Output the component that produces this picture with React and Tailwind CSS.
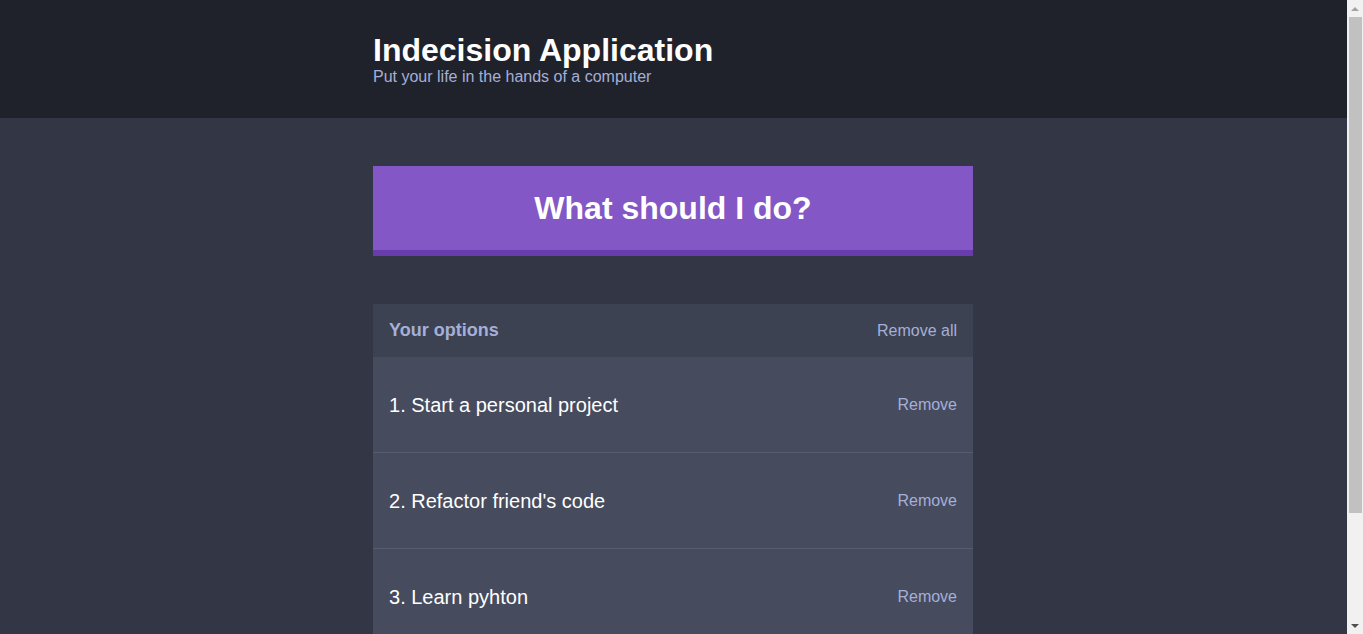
const options = ['Start a personal project', "Refactor friend's code", 'Learn pyhton'];

const Header = () => (
  <header className="bg-[#20222b] pt-8 pb-8 pr-px">
    <div className="mx-auto w-[600px]">
      <h1 className="text-[32px] leading-[36px] font-bold text-white">Indecision Application</h1>
      <h2 className="text-[16px] leading-[18px] text-[#a5afd7]">Put your life in the hands of a computer</h2>
    </div>
  </header>
);

const Option = ({ index, text }) => (
  <div className="flex h-[96px] items-center justify-between border-b border-[#575c72] px-4">
    <p className="text-[20px] text-white">
      {index}. {text}
    </p>
    <button className="text-[16px] text-[#a5afd7]">Remove</button>
  </div>
);

// browser scrollbar strip on the right edge
const Scrollbar = () => (
  <div className="flex h-full w-[16px] shrink-0 flex-col items-center bg-[#f1f1f1]">
    <div className="flex h-[17px] w-full items-center justify-center">
      <div className="h-0 w-0 border-x-[4px] border-b-[4px] border-x-transparent border-b-[#a3a3a3]" />
    </div>
    <div className="ml-[1px] h-[496px] w-[13px] bg-[#c1c1c1]" />
    <div className="flex-1" />
    <div className="flex h-[17px] w-full items-center justify-center">
      <div className="h-0 w-0 border-x-[4px] border-t-[4px] border-x-transparent border-t-[#505050]" />
    </div>
  </div>
);

export default function App() {
  return (
    <div className="flex h-screen overflow-hidden bg-[#333745] font-['Liberation_Sans',Arial,sans-serif]">
      <main className="min-w-0 flex-1 pb-[160px]">
        <Header />

        <div className="pr-px">
          <div className="mx-auto mt-12 w-[600px]">
            <button className="flex h-[90px] w-full items-center justify-center border-b-[6px] border-[#693cad] bg-[#8357c5] text-[32px] font-bold text-white">
              What should I do?
            </button>

            <div className="mt-12 bg-[#464b5e]">
              <div className="flex h-[53px] items-center justify-between bg-[#3c4251] px-4">
                <h3 className="text-[18px] font-bold text-[#a5afd7]">Your options</h3>
                <button className="text-[16px] text-[#a5afd7]">Remove all</button>
              </div>

              {options.map((option, i) => (
                <Option key={option} index={i + 1} text={option} />
              ))}

              <form className="flex gap-3 p-4" onSubmit={(e) => e.preventDefault()}>
                <input
                  type="text"
                  name="option"
                  className="flex-1 border-b-[3px] border-[#3c4251] bg-[#333745] px-3 py-2 text-white outline-none"
                />
                <button className="border-b-[3px] border-[#693cad] bg-[#8357c5] px-4 py-2 text-white">Add Option</button>
              </form>
            </div>
          </div>
        </div>
      </main>
      <Scrollbar />
    </div>
  );
}
